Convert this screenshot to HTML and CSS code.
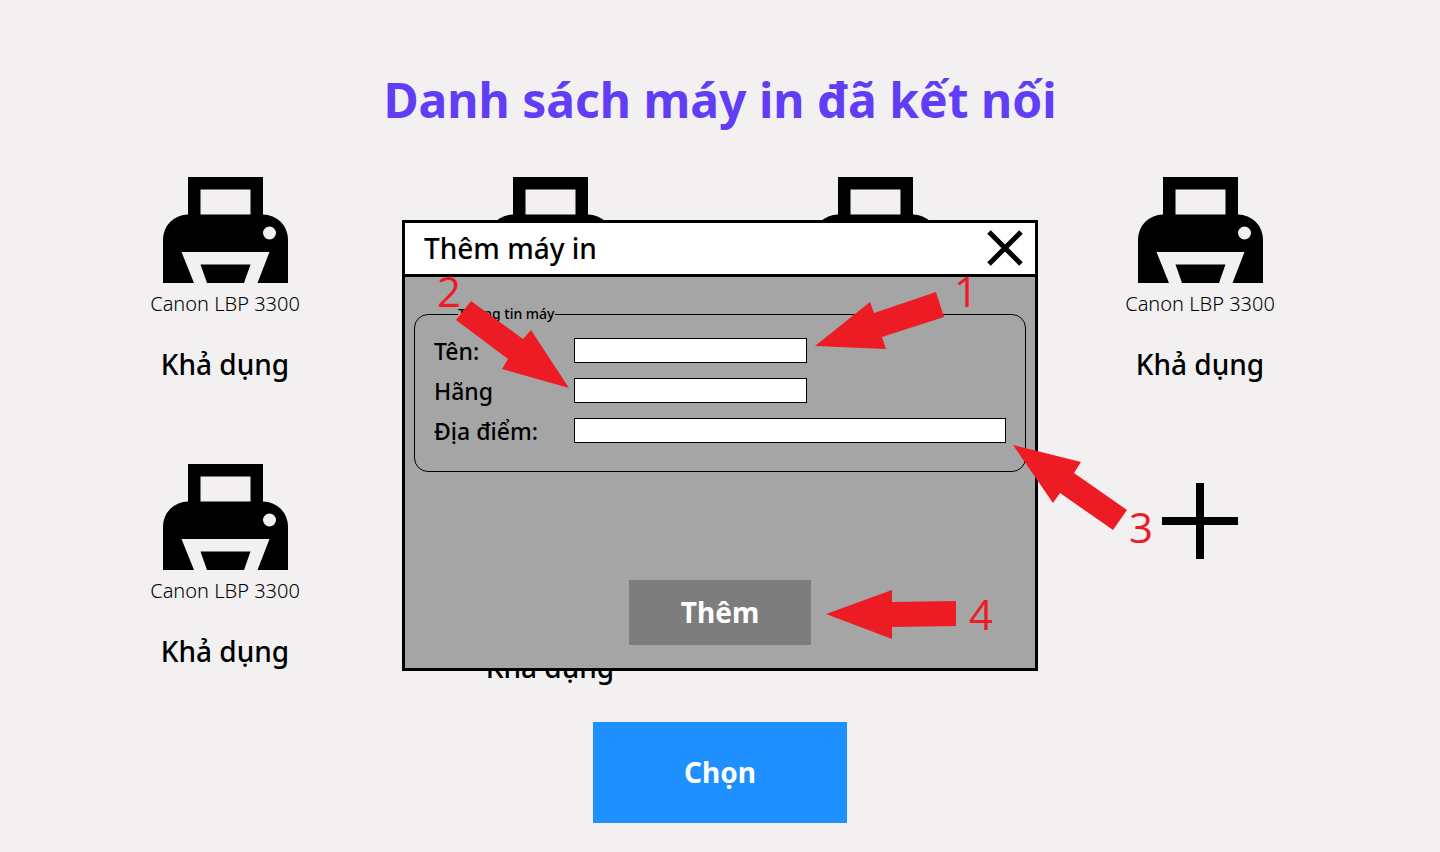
FILE: index.html
```html
<!DOCTYPE html>
<html lang="vi">
<head>
<meta charset="utf-8">
<meta name="viewport" content="width=device-width, initial-scale=1">
<title>Danh sách máy in đã kết nối</title>
<link rel="stylesheet" href="styles.css">
</head>
<body>
<svg width="0" height="0" class="sprite" aria-hidden="true">
  <symbol id="printer" viewBox="0 0 125 106">
    <path fill-rule="evenodd" d="M25 0H100V37.500A25 25 0 0 1 125 62.500V106H94.500L106.500 75H18.500L31 106H0V62.500A25 25 0 0 1 25 37.500ZM37.500 12.500V37.500H87.500V12.500ZM106.500 49.500A6.500 6.500 0 1 0 106.500 62.500A6.500 6.500 0 1 0 106.500 49.500Z"/>
    <path d="M37.500 87.500H87.500L81 106H44Z"/>
  </symbol>
</svg>
<main class="page">
  <h1 class="title">Danh sách máy in đã kết nối</h1>
  <ul class="printers">
    <li class="printer"><svg class="printer-icon"><use href="#printer"/></svg><span class="model">Canon LBP 3300</span><span class="status">Khả dụng</span></li>
    <li class="printer"><svg class="printer-icon"><use href="#printer"/></svg><span class="model">Canon LBP 3300</span><span class="status">Khả dụng</span></li>
    <li class="printer"><svg class="printer-icon"><use href="#printer"/></svg><span class="model">Canon LBP 3300</span><span class="status">Khả dụng</span></li>
    <li class="printer"><svg class="printer-icon"><use href="#printer"/></svg><span class="model">Canon LBP 3300</span><span class="status">Khả dụng</span></li>
    <li class="printer"><svg class="printer-icon"><use href="#printer"/></svg><span class="model">Canon LBP 3300</span><span class="status">Khả dụng</span></li>
    <li class="printer lowered"><svg class="printer-icon"><use href="#printer"/></svg><span class="model">Canon LBP 3300</span><span class="status">Khả dụng</span></li>
    <li class="printer add-slot">
      <button class="add" type="button" aria-label="Thêm máy in"><svg class="add-icon" viewBox="0 0 76 76"><path d="M38 0V76M0 38H76" stroke="#000" stroke-width="8"/></svg></button>
    </li>
  </ul>
  <button class="choose" type="button">Chọn</button>
</main>
<div class="overlay">
  <form class="dialog" role="dialog" aria-labelledby="dialog-title">
    <header class="dialog-head">
      <h2 class="dialog-title" id="dialog-title">Thêm máy in</h2>
      <button class="close" type="button" aria-label="Đóng"><svg class="close-icon" viewBox="0 0 36 36"><path d="M2 2L34 34M34 2L2 34" stroke="#000" stroke-width="5"/></svg></button>
    </header>
    <div class="dialog-body">
      <fieldset class="info">
        <legend class="legend">Thông tin máy</legend>
        <div class="fields">
          <label class="label" for="name">Tên:</label><input class="input" id="name" type="text">
          <label class="label" for="brand">Hãng</label><input class="input" id="brand" type="text">
          <label class="label" for="place">Địa điểm:</label><input class="input wide" id="place" type="text">
        </div>
      </fieldset>
      <button class="submit" type="submit">Thêm</button>
    </div>
    <svg class="notes" viewBox="0 0 630 445" aria-hidden="true">
      <path d="M410 123L465 79L469 90L531 69L539 94L477 114L481 126Z"/>
      <path d="M164 165L126 107L118 116L66 78L51 97L103 136L97 146Z"/>
      <path d="M608 222L676 239L669 250L722 287L708 307L655 270L648 280Z"/>
      <path d="M421 391L487 367L487 379L551 378L551 403L487 404L487 416Z"/>
      <text x="549" y="84">1</text>
      <text x="32" y="84">2</text>
      <text x="724" y="320">3</text>
      <text x="564" y="407">4</text>
    </svg>
  </form>
</div>
</body>
</html>
```
FILE: styles.css
```css
* {
  box-sizing: border-box;
}

body {
  margin: 0;
  background: #f2f0f1;
  color: #000;
  font-family: "Noto Sans", "Open Sans", sans-serif;
}

button {
  border: 0;
  padding: 0;
  font: inherit;
  cursor: pointer;
}

.sprite {
  position: absolute;
}

.page {
  display: flex;
  flex-direction: column;
  align-items: center;
  padding: 68px 24px 29px;
}

.title {
  margin: 0;
  color: #613df5;
  font-size: 48px;
  font-weight: 700;
  line-height: 64px;
}

.printers {
  display: grid;
  grid-template-columns: repeat(4, 1fr);
  row-gap: 80px;
  width: 100%;
  max-width: 1300px;
  margin: 45px 15px 0 0;
  padding: 0;
  list-style: none;
}

.printer {
  display: flex;
  flex-direction: column;
  align-items: center;
}

.printer-icon {
  width: 125px;
  height: 106px;
}

.model {
  margin-top: 7px;
  font-size: 20px;
  font-weight: 300;
  line-height: 28px;
}

.status {
  margin-top: 26px;
  font-size: 28px;
  font-weight: 500;
  line-height: 40px;
}

.lowered {
  padding-top: 16px;
}

.add-slot {
  grid-column: 4;
  padding-top: 19px;
}

.add {
  background: none;
}

.add-icon {
  display: block;
  width: 76px;
  height: 76px;
}

.choose {
  margin-top: 35px;
  padding: 32px 91px;
  background: #1e90ff;
  color: #fff;
  font-size: 28px;
  font-weight: 700;
  line-height: 37px;
}

.overlay {
  position: absolute;
  inset: 0;
  display: flex;
  justify-content: center;
  align-items: flex-start;
  padding-top: 220px;
}

.dialog {
  position: relative;
  width: 636px;
  border: 3px solid #000;
  background: #a5a5a5;
}

.dialog-head {
  display: flex;
  align-items: center;
  justify-content: space-between;
  padding: 7px 12px 8px 19px;
  border-bottom: 3px solid #000;
  background: #fff;
}

.dialog-title {
  margin: 0;
  font-size: 28px;
  font-weight: 500;
  line-height: 36px;
}

.close {
  background: none;
}

.close-icon {
  display: block;
  width: 36px;
  height: 36px;
}

.dialog-body {
  display: flex;
  flex-direction: column;
  padding: 27px 9px 23px;
}

.info {
  min-width: 0;
  margin: 0;
  padding: 14px 19px 28px;
  border: 1px solid #000;
  border-radius: 14px;
}

.legend {
  margin-left: 24px;
  padding: 0;
  font-size: 14px;
  font-weight: 500;
  line-height: 20px;
}

.fields {
  display: grid;
  grid-template-columns: 140px 1fr;
  row-gap: 15px;
}

.label {
  font-size: 23px;
  font-weight: 500;
  line-height: 26px;
  height: 25px;
}

.input {
  width: 233px;
  height: 25px;
  padding: 0 4px;
  border: 1px solid #000;
  border-radius: 0;
  background: #fff;
  font: inherit;
  font-size: 16px;
}

.wide {
  width: 100%;
}

.submit {
  align-self: center;
  margin-top: 108px;
  padding: 14px 52px;
  background: #7d7d7d;
  color: #fff;
  font-size: 28px;
  font-weight: 700;
  line-height: 37px;
}

.notes {
  position: absolute;
  inset: 0;
  width: 100%;
  height: 100%;
  overflow: visible;
  pointer-events: none;
  fill: #ed1c24;
  font-family: "Open Sans", "Noto Sans", sans-serif;
  font-size: 42px;
}
```
